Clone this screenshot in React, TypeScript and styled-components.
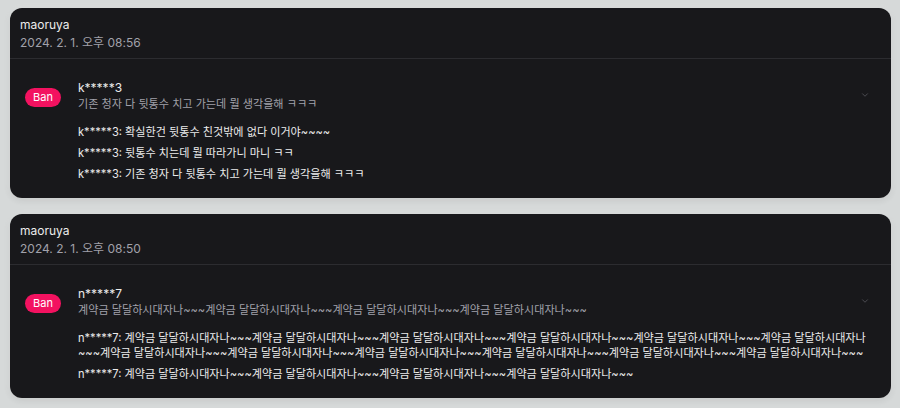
import React from "react";
import styled, {createGlobalStyle} from "styled-components";

type LogType = {
    id: number
    author: string
    date: string
    user: string
    reason: string
    chats: string[]
}

const unit = "계약금 달달하시대자나~~~"

const logs: LogType[] = [
    {
        id: 1,
        author: "maoruya",
        date: "2024. 2. 1. 오후 08:56",
        user: "k*****3",
        reason: "기존 청자 다 뒷통수 치고 가는데 뭘 생각을해 ㅋㅋㅋ",
        chats: [
            "확실한건 뒷통수 친것밖에 없다 이거야~~~~",
            "뒷통수 치는데 뭘 따라가니 마니 ㅋㅋ",
            "기존 청자 다 뒷통수 치고 가는데 뭘 생각을해 ㅋㅋㅋ",
        ],
    },
    {
        id: 2,
        author: "maoruya",
        date: "2024. 2. 1. 오후 08:50",
        user: "n*****7",
        reason: unit.repeat(4),
        chats: [unit.repeat(12), unit.repeat(4)],
    },
]

const ChevronIcon = () => (
    <svg width="10" height="10" viewBox="0 0 24 24" fill="none" stroke="currentColor"
         strokeWidth="2" strokeLinecap="round" strokeLinejoin="round">
        <path d="M6 9l6 6 6-6"/>
    </svg>
)

export default function App() {
    return (
        <>
            <GlobalStyle/>
            <Page>
                {logs.map(log =>
                    <Card key={log.id}>
                        <CardHeader>
                            <Author>{log.author}</Author>
                            <DateText>{log.date}</DateText>
                        </CardHeader>
                        <Divider/>
                        <CardBody>
                            <Trigger>
                                <Badge>Ban</Badge>
                                <TriggerText>
                                    <UserName>{log.user}</UserName>
                                    <Reason>{log.reason}</Reason>
                                </TriggerText>
                                <Chevron><ChevronIcon/></Chevron>
                            </Trigger>
                            <ChatList>
                                {log.chats.map((c, i) =>
                                    <ChatLine key={i}>{`${log.user}: ${c}`}</ChatLine>)}
                            </ChatList>
                        </CardBody>
                    </Card>
                )}
            </Page>
        </>
    )
}

//styled-components
const GlobalStyle = createGlobalStyle`
  body {
    margin: 0;
    background: #d6d9d9;
    font-family: Inter, "Noto Sans CJK KR", sans-serif;
  }
`
const Page = styled.div`
  display: flex;
  flex-direction: column;
  gap: 16px;
  padding: 8px 9px 8px 10px;
`
const Card = styled.div`
  background: #18181b;
  border-radius: 12px;
  box-shadow: 0 0 6px rgba(255, 255, 255, 0.35), 0 2px 6px rgba(0, 0, 0, 0.12);
  overflow: hidden;
`
const CardHeader = styled.div`
  padding: 9px 10px 7px;
  display: flex;
  flex-direction: column;
  gap: 2px;
`
const Author = styled.div`
  font-size: 12px;
  line-height: 16px;
  color: #ececec;
`
const DateText = styled.div`
  font-size: 12px;
  line-height: 16px;
  color: #a1a1aa;
`
const Divider = styled.div`
  height: 1px;
  background: #2c2c30;
`
const CardBody = styled.div`
  padding: 21px 21px 16px 15px;
`
const Trigger = styled.div`
  display: flex;
  align-items: center;
`
const Badge = styled.div`
  width: 36px;
  height: 19px;
  border-radius: 10px;
  background: #f31260;
  color: #fff;
  font-size: 11px;
  line-height: 19px;
  text-align: center;
  margin-top: 3px;
`
const TriggerText = styled.div`
  flex: 1;
  margin-left: 17px;
  display: flex;
  flex-direction: column;
`
const UserName = styled.div`
  font-size: 12px;
  line-height: 16px;
  color: #ececec;
`
const Reason = styled.div`
  font-size: 11.1px;
  line-height: 16px;
  color: #a1a1aa;
`
const Chevron = styled.div`
  color: #56565c;
  display: flex;
  margin-top: -2px;
`
const ChatList = styled.div`
  margin-top: 13px;
  padding-left: 53px;
  display: flex;
  flex-direction: column;
  gap: 6px;
`
const ChatLine = styled.div`
  font-size: 11.1px;
  line-height: 15px;
  color: #ececec;
`
